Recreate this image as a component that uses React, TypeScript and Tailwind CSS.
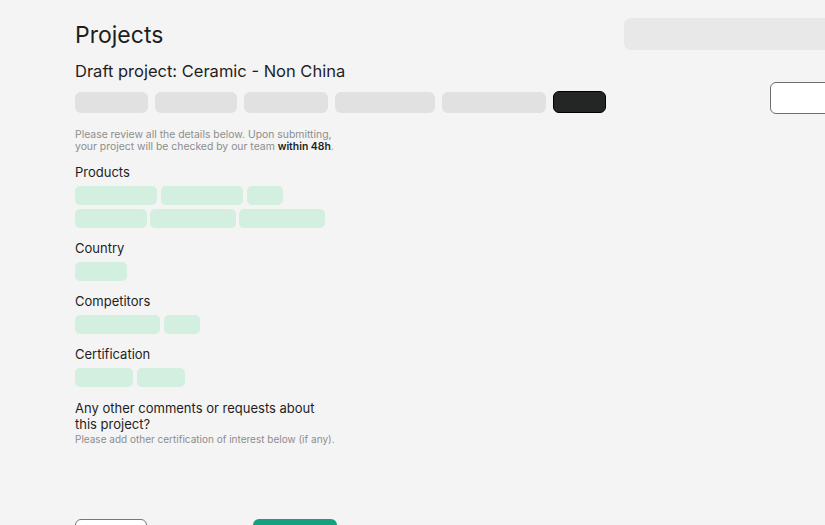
import React from 'react';

const steps = [73, 82, 84, 100, 104];

const sections: { title: string; rows: number[][] }[] = [
  { title: 'Products', rows: [[82, 82, 36], [72, 86, 86]] },
  { title: 'Country', rows: [[52]] },
  { title: 'Competitors', rows: [[85, 36]] },
  { title: 'Certification', rows: [[58, 48]] },
];

const Chip: React.FC<{ width: number }> = ({ width }) => (
  <div className="h-[19px] rounded-[5px] bg-[#d3efdf]" style={{ width }} />
);

const App: React.FC = () => {
  return (
    <div
      className="h-[525px] w-[825px] overflow-hidden bg-[#f4f4f4] text-[#1e1e1e]"
      style={{ fontFamily: 'Inter, "Noto Sans", sans-serif' }}
    >
      <div className="flex">
        {/* main column */}
        <div className="ml-[75px] w-[549px] shrink-0">
          <h1 className="mt-[21px] text-[23px] leading-[28px] font-normal">Projects</h1>
          <h2 className="mt-[12px] text-[16.5px] leading-[20px]">Draft project: Ceramic - Non China</h2>

          {/* steps */}
          <div className="mt-[11px] flex gap-[7px]">
            {steps.map((w, i) => (
              <div key={i} className="h-[21px] rounded-[6px] bg-[#e1e1e1]" style={{ width: w }} />
            ))}
            <div className="h-[22px] w-[53px] -mt-px rounded-[6px] border border-black bg-[#232625]" />
          </div>

          <p className="mt-[16px] text-[10.4px] leading-[12px] text-[#8d8d8d]">
            Please review all the details below. Upon submitting,
            <br />
            your project will be checked by our team <span className="font-semibold text-[#1e1e1e]">within 48h</span>.
          </p>

          {sections.map((s, i) => (
            <div key={s.title} className={i === 0 ? 'mt-[11px]' : 'mt-[12px]'}>
              <div className="text-[13px] leading-[16px]">{s.title}</div>
              <div className="mt-[6px] flex flex-col gap-[4px]">
                {s.rows.map((row, r) => (
                  <div key={r} className={`flex ${r === 0 ? 'gap-[4px]' : 'gap-[3px]'}`}>
                    {row.map((w, c) => (
                      <Chip key={c} width={w} />
                    ))}
                  </div>
                ))}
              </div>
            </div>
          ))}

          <div className="mt-[13px] w-[260px] text-[13px] leading-[16px]">
            Any other comments or requests about this project?
          </div>
          <p className="mt-[1px] text-[10px] leading-[12px] text-[#8d8d8d]">
            Please add other certification of interest below (if any).
          </p>

          <div className="mt-[74px] flex">
            <button className="h-[32px] w-[72px] rounded-[6px] border border-[#777] bg-white" />
            <button className="ml-[106px] h-[32px] w-[84px] rounded-[6px] bg-[#17a07f]" />
          </div>
        </div>

        {/* right column */}
        <div className="flex-1">
          <div className="mt-[18px] h-[32px] w-[320px] rounded-[7px] bg-[#e8e8e8]" />
          <div className="mt-[32px] ml-[146px] h-[32px] w-[100px] rounded-[6px] border border-[#6f6f6f] bg-white" />
        </div>
      </div>
    </div>
  );
};

export default App;
